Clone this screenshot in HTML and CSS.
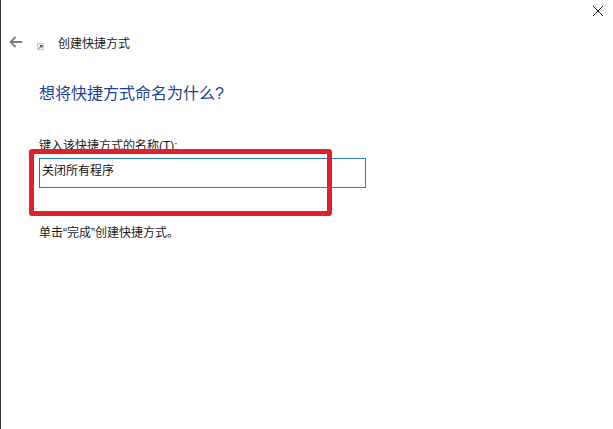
FILE: index.html
```html
<!DOCTYPE html>
<html lang="zh-CN">
<head>
  <meta charset="utf-8">
  <title>创建快捷方式</title>
  <link rel="stylesheet" href="styles.css">
</head>
<body>
  <div class="window">
    <div class="close-row">
      <svg class="close-icon" width="12" height="12" viewBox="0 0 12 12">
        <path d="M1 1L11 11M11 1L1 11" stroke="#222" stroke-width="1" fill="none"/>
      </svg>
    </div>
    <div class="nav">
      <svg class="back-icon" width="14" height="12" viewBox="0 0 14 12">
        <path d="M13 6H2M6.500 1L1.500 6L6.500 11" stroke="#7d7d7d" stroke-width="1.800" fill="none"/>
      </svg>
      <svg class="shortcut-icon" width="7" height="7" viewBox="0 0 7 7">
        <rect width="7" height="7" fill="#c4cbd6"/>
        <rect x="1" y="1" width="5" height="5" fill="#eef1f5"/>
        <path d="M2 5.500L5 2.500M3 2.500H5V4.500" stroke="#1f3f7a" stroke-width="1" fill="none"/>
      </svg>
      <span class="nav-title">创建快捷方式</span>
    </div>
    <div class="content">
      <h1>想将快捷方式命名为什么?</h1>
      <label class="name-label" for="name">键入该快捷方式的名称(T):</label>
      <div class="input-wrap">
        <input class="name-input" id="name" type="text" value="关闭所有程序">
        <div class="highlight"></div>
      </div>
      <p class="hint">单击“完成”创建快捷方式。</p>
    </div>
  </div>
</body>
</html>
```

FILE: styles.css
```css
html, body {
  margin: 0;
  height: 100%;
  overflow: hidden;
}
body {
  background: #fff;
  font-family: "Liberation Sans", "Noto Sans CJK SC", sans-serif;
  font-size: 12px;
  color: #1a1a1a;
}
.window {
  height: 429px;
  box-sizing: border-box;
  border-left: 1px solid #333;
}
.close-row {
  display: flex;
  justify-content: flex-end;
  height: 33px;
  padding: 5px 9px 0 0;
  box-sizing: border-box;
}
.nav {
  display: flex;
  align-items: center;
  height: 18px;
  padding-left: 8px;
}
.back-icon {
  margin-right: 14px;
}
.shortcut-icon {
  margin-top: 8px;
  margin-right: 14px;
}
.nav-title {
  margin-top: 4px;
  line-height: 18px;
}
.content {
  padding: 0 0 0 38px;
}
h1 {
  margin: 0;
  padding-top: 31px;
  font-size: 16px;
  font-weight: normal;
  line-height: 24px;
  color: #1d4192;
}
.name-label {
  display: block;
  margin-top: 32px;
  line-height: 17px;
}
.input-wrap {
  position: relative;
  width: 327px;
  margin-top: 3px;
}
.name-input {
  display: block;
  width: 100%;
  height: 30px;
  box-sizing: border-box;
  border: 1px solid #2a79b5;
  padding: 0 0 8px 2px;
  font: inherit;
  color: #111;
  outline: none;
}
.highlight {
  position: absolute;
  left: -10px;
  top: -9px;
  width: 303px;
  height: 67px;
  box-sizing: border-box;
  border: 5px solid #e0202c;
  border-radius: 3px;
}
.hint {
  margin: 37px 0 0;
  line-height: 17px;
}
```
